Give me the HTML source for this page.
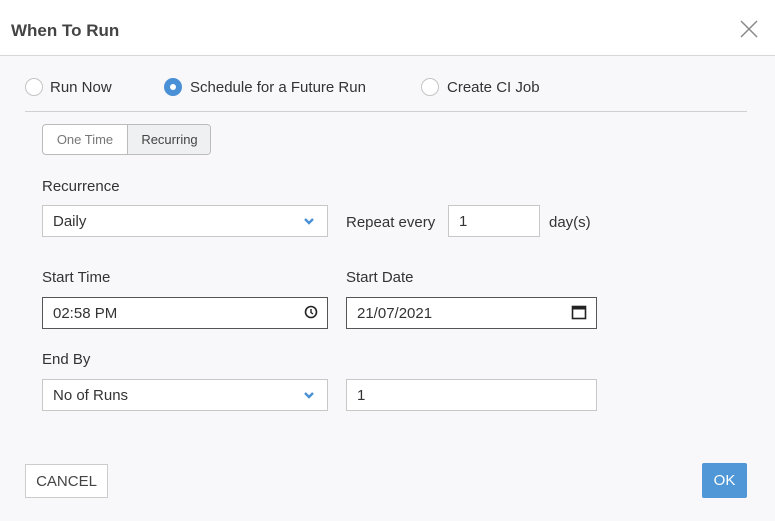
<!DOCTYPE html>
<html><head><meta charset="utf-8"><style>
*{box-sizing:border-box;margin:0;padding:0}
body{width:775px;height:521px;background:#f8f8fa;font-family:"Liberation Sans",sans-serif;color:#333;position:relative;overflow:hidden}
.a{position:absolute}
.hdr{left:0;top:0;width:775px;height:56px;background:#fff;border-bottom:1px solid #d8d8d8}
.t{font-size:15px}
.box{background:#fff;border:1px solid #c8c8c8;height:32px;font-size:15px;padding:1px 10px 0;line-height:30px}
.dark{border-color:#555}
.radio{width:18px;height:18px;border-radius:50%;border:1px solid #c4c4c4;background:#fff}
</style></head><body>
<div class="a hdr"></div>
<div class="a" style="left:11px;top:21px;font-size:17px;font-weight:bold;color:#444">When To Run</div>
<svg class="a" style="left:739px;top:19px" width="20" height="20"><path d="M2 2L18 18M18 2L2 18" stroke="#888" stroke-width="1.5"/></svg>

<div class="a radio" style="left:25px;top:78px"></div>
<div class="a t" style="left:50px;top:79px">Run Now</div>
<div class="a radio" style="left:164px;top:78px;background:#4a90d6;border-color:#4a90d6"><div style="width:6px;height:6px;background:#fff;border-radius:50%;margin:5px"></div></div>
<div class="a t" style="left:190px;top:79px">Schedule for a Future Run</div>
<div class="a radio" style="left:421px;top:78px"></div>
<div class="a t" style="left:447px;top:79px">Create CI Job</div>
<div class="a" style="left:25px;top:111px;width:722px;height:1px;background:#d0d0d0"></div>

<div class="a" style="left:42px;top:124px;width:169px;height:31px;border:1px solid #bbb;border-radius:4px;background:#fff;overflow:hidden;font-size:13px">
<div class="a" style="left:0;top:0;width:84px;height:29px;line-height:30px;text-align:center;color:#777">One Time</div>
<div class="a" style="left:84px;top:0;width:84px;height:29px;line-height:30px;text-align:center;background:#eef0f2;border-left:1px solid #bbb;color:#444">Recurring</div>
</div>

<div class="a t" style="left:42px;top:178px">Recurrence</div>
<div class="a box" style="left:42px;top:205px;width:286px">Daily</div>
<svg class="a" style="left:302px;top:217px" width="14" height="10"><path d="M3 2L7 6L11 2" stroke="#4a90d6" stroke-width="2.4" fill="none"/></svg>
<div class="a t" style="left:346px;top:214px">Repeat every</div>
<div class="a box" style="left:448px;top:205px;width:92px">1</div>
<div class="a t" style="left:549px;top:214px">day(s)</div>

<div class="a t" style="left:42px;top:269px">Start Time</div>
<div class="a box dark" style="left:42px;top:297px;width:286px">02:58 PM</div>
<svg class="a" style="left:304px;top:305px" width="14" height="14"><circle cx="7" cy="7" r="5.5" stroke="#222" stroke-width="1.6" fill="none"/><path d="M7 4V7.5L9 9" stroke="#222" stroke-width="1.4" fill="none"/></svg>
<div class="a t" style="left:346px;top:269px">Start Date</div>
<div class="a box dark" style="left:346px;top:297px;width:251px">21/07/2021</div>
<svg class="a" style="left:571px;top:304px" width="16" height="16"><rect x="1.5" y="2.5" width="13" height="12" stroke="#222" stroke-width="1.6" fill="none"/><rect x="1.5" y="2.5" width="13" height="3" fill="#222"/></svg>

<div class="a t" style="left:42px;top:351px">End By</div>
<div class="a box" style="left:42px;top:379px;width:286px">No of Runs</div>
<svg class="a" style="left:302px;top:391px" width="14" height="10"><path d="M3 2L7 6L11 2" stroke="#4a90d6" stroke-width="2.4" fill="none"/></svg>
<div class="a box" style="left:346px;top:379px;width:251px">1</div>

<div class="a" style="left:25px;top:464px;width:83px;height:34px;background:#fff;border:1px solid #ccc;font-size:15px;line-height:33px;text-align:center;color:#444">CANCEL</div>
<div class="a" style="left:702px;top:463px;width:45px;height:35px;background:#4f97d7;border-radius:2px;font-size:15px;line-height:35px;text-align:center;color:#fff">OK</div>
</body></html>
